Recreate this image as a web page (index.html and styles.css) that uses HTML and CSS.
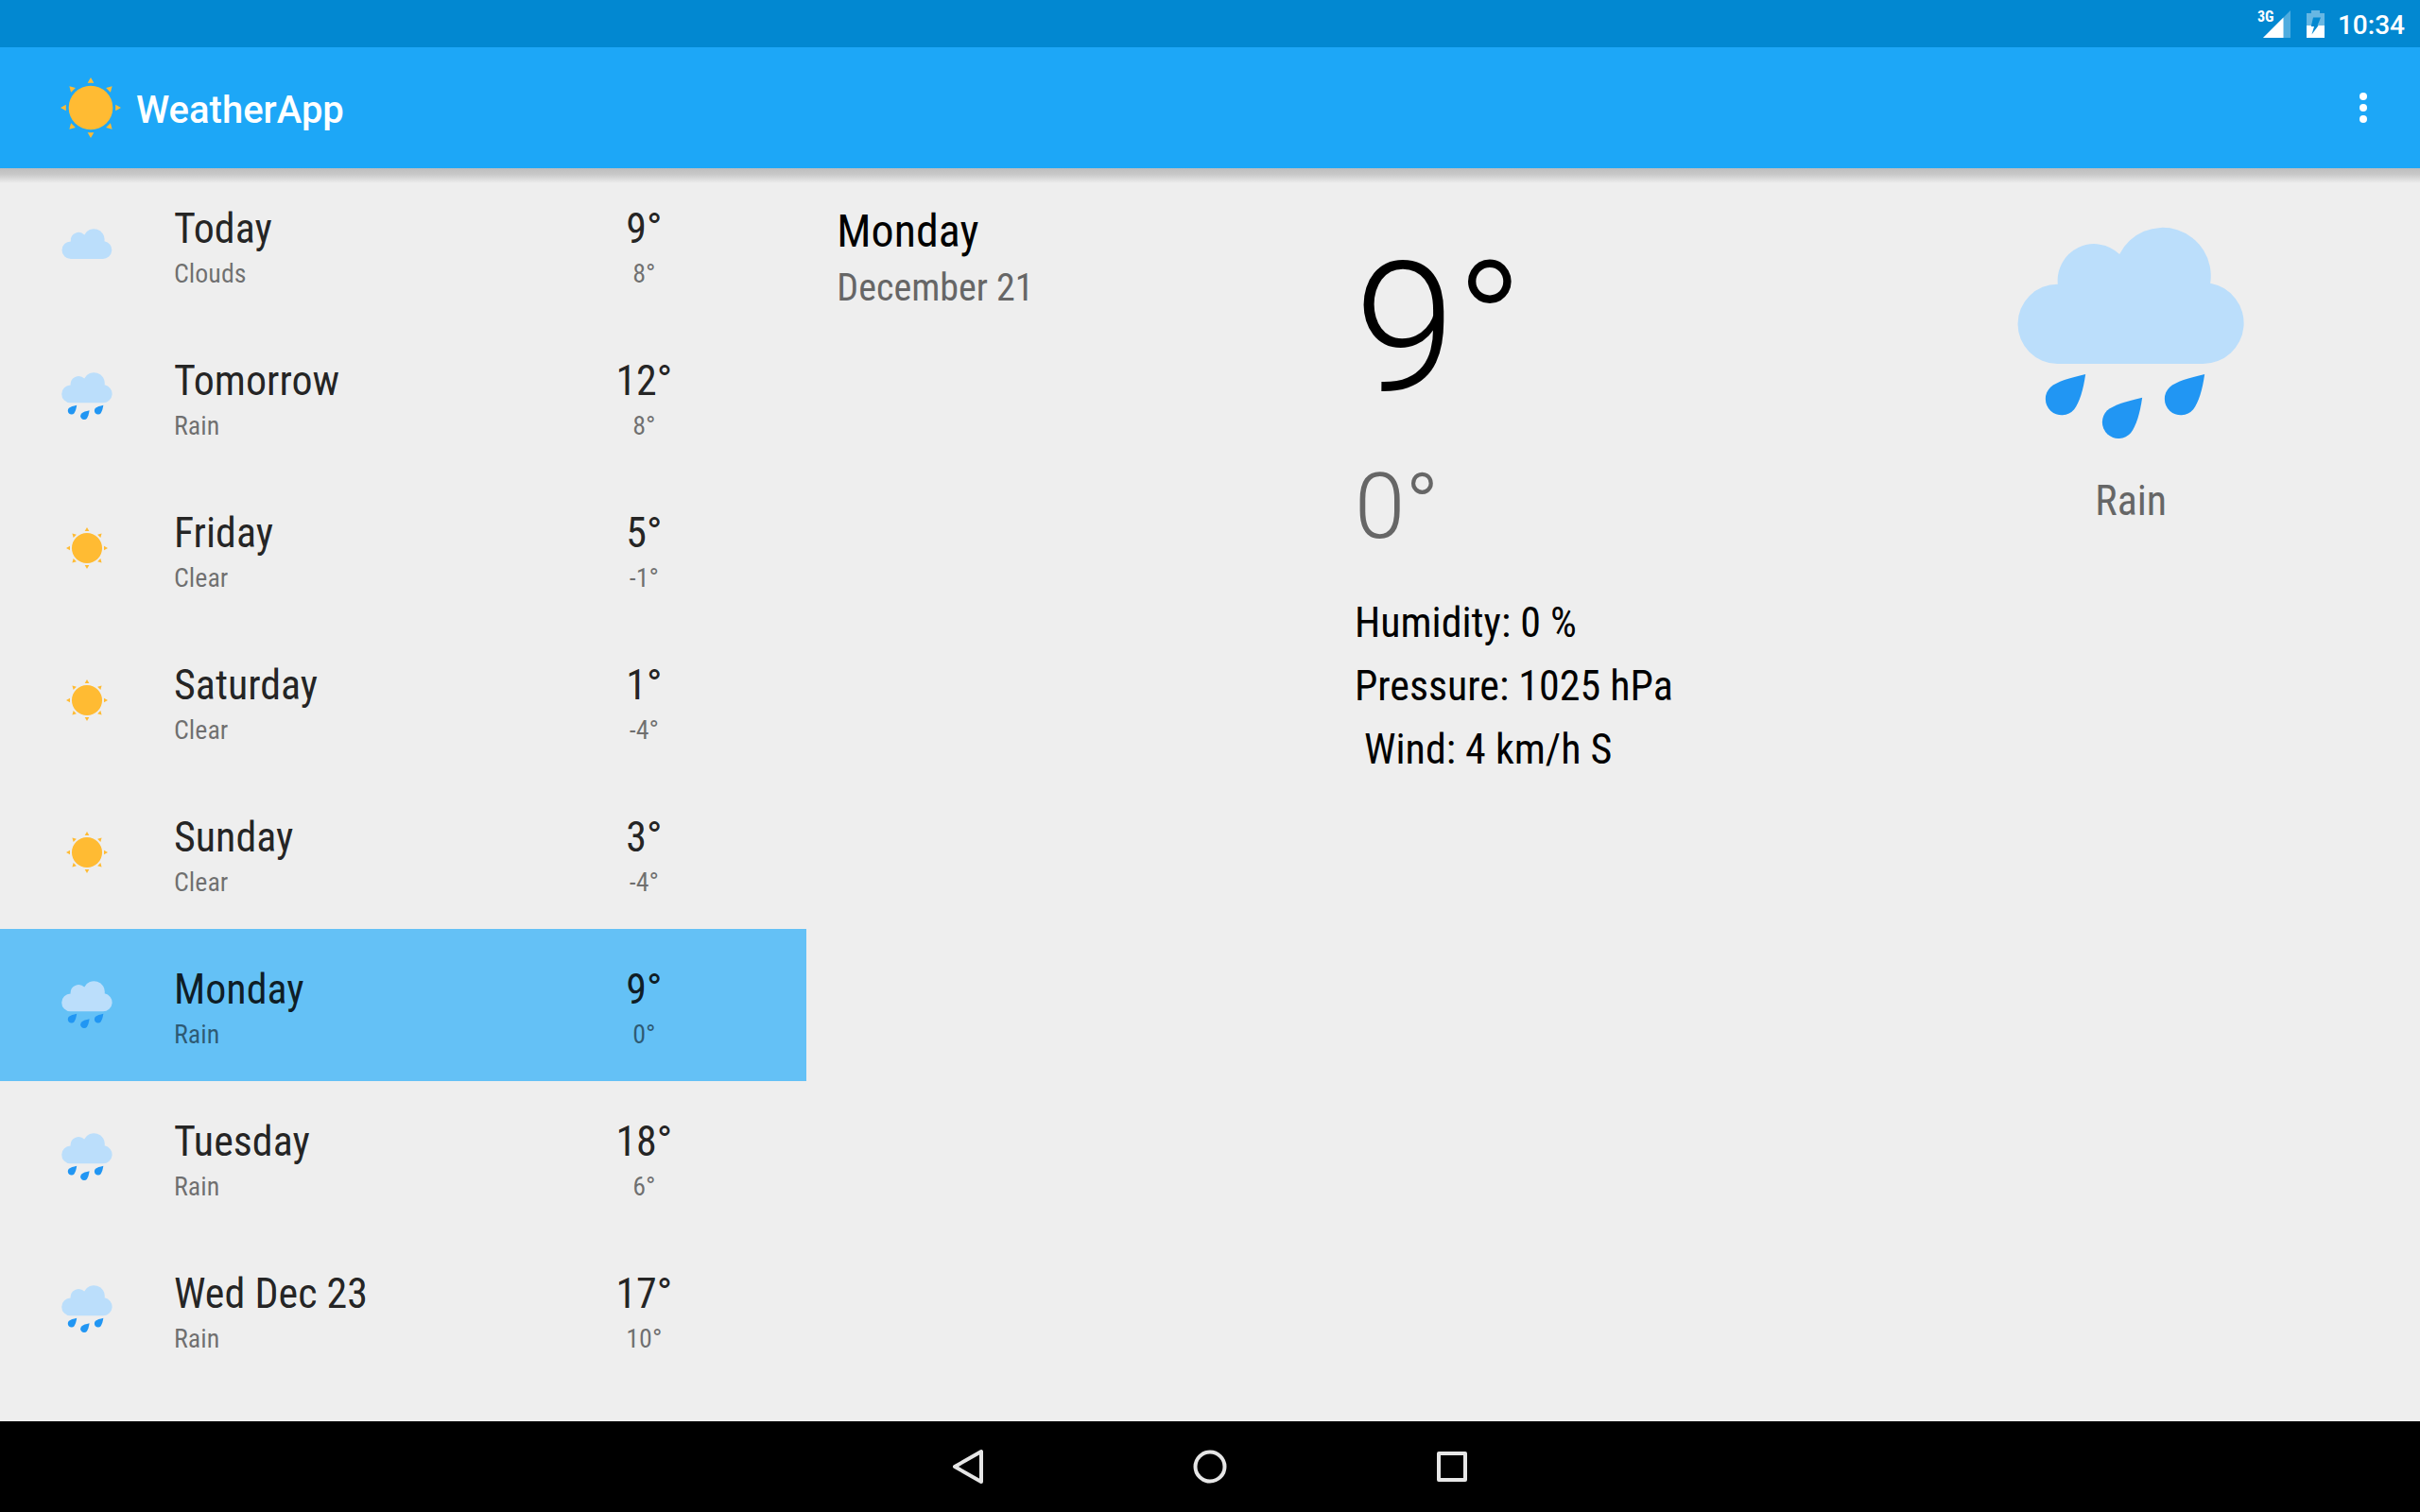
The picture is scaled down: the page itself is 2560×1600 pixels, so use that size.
FILE: index.html
```html
<!DOCTYPE html>
<html lang="en">
<head>
<meta charset="utf-8">
<meta name="viewport" content="width=device-width, initial-scale=1">
<title>WeatherApp</title>
<link rel="stylesheet" href="styles.css">
</head>
<body>
<svg class="sprite" aria-hidden="true">
  <symbol id="cloud" viewBox="101 88 722 435">
    <path fill="#bbdefb" d="M228 523A126.500 126.500 0 0 1 229 270A116 116 0 0 1 425 175A153 153 0 0 1 713 267A129 129 0 0 1 690 523Z"/>
  </symbol>
  <symbol id="rain" viewBox="101 88 722 672">
    <path fill="#bbdefb" d="M228 523A126.500 126.500 0 0 1 229 270A116 116 0 0 1 425 175A153 153 0 0 1 713 267A129 129 0 0 1 690 523Z"/>
    <g fill="#2196f3">
      <path d="M317 556C268 567 225 580 206 597A51.700 51.700 0 1 0 281 668C298 645 310 605 317 556Z"/>
      <path d="M497 630C448 641 405 654 386 671A51.700 51.700 0 1 0 461 742C478 719 490 679 497 630Z"/>
      <path d="M695 556C646 567 603 580 584 597A51.700 51.700 0 1 0 659 668C676 645 688 605 695 556Z"/>
    </g>
  </symbol>
  <symbol id="sun" viewBox="-32.5 -32.5 65 65">
    <g fill="#ffbb33">
      <circle r="23.7"/>
      <path id="ray" d="M0-32.5L3.4-26.6H-3.4Z"/>
      <use href="#ray" transform="rotate(45)"/>
      <use href="#ray" transform="rotate(90)"/>
      <use href="#ray" transform="rotate(135)"/>
      <use href="#ray" transform="rotate(180)"/>
      <use href="#ray" transform="rotate(225)"/>
      <use href="#ray" transform="rotate(270)"/>
      <use href="#ray" transform="rotate(315)"/>
    </g>
  </symbol>
</svg>

<div class="status-bar">
  <div class="signal">
    <span class="network">3G</span>
    <svg class="signal-icon" viewBox="0 0 29 29" aria-hidden="true"><path fill="#fff" fill-opacity=".3" d="M0 29L29 0V29Z"/><path fill="#fff" d="M0 29L21.500 7.500V29Z"/></svg>
  </div>
  <svg class="battery-icon" viewBox="0 0 19 29" aria-hidden="true">
    <path fill="#fff" fill-opacity=".4" fill-rule="evenodd" d="M5 0H14V3H19V16H11.500L15 7.500H7L5 16H0V3H5Z"/>
    <path fill="#fff" d="M0 16H5L4.800 17H8L5.500 25.500L12.500 16H19V29H0Z"/>
  </svg>
  <time class="clock">10:34</time>
</div>

<header class="app-bar">
  <svg class="logo" aria-hidden="true"><use href="#sun"/></svg>
  <h1 class="app-title">WeatherApp</h1>
  <button class="overflow" type="button" aria-label="More options">
    <svg class="overflow-icon" viewBox="0 0 8 32" aria-hidden="true"><g fill="#fff"><circle cx="4" cy="4" r="4"/><circle cx="4" cy="16" r="4"/><circle cx="4" cy="28" r="4"/></g></svg>
  </button>
</header>

<main class="content">
  <ul class="forecast">
    <li><button class="day" type="button"><span class="day-icon"><svg class="icon-cloud"><use href="#cloud"/></svg></span><span class="day-text"><span class="primary">Today</span><span class="secondary">Clouds</span></span><span class="day-temp"><span class="primary">9°</span><span class="secondary">8°</span></span></button></li>
    <li><button class="day" type="button"><span class="day-icon"><svg class="icon-rain"><use href="#rain"/></svg></span><span class="day-text"><span class="primary">Tomorrow</span><span class="secondary">Rain</span></span><span class="day-temp"><span class="primary">12°</span><span class="secondary">8°</span></span></button></li>
    <li><button class="day" type="button"><span class="day-icon"><svg class="icon-sun"><use href="#sun"/></svg></span><span class="day-text"><span class="primary">Friday</span><span class="secondary">Clear</span></span><span class="day-temp"><span class="primary">5°</span><span class="secondary">-1°</span></span></button></li>
    <li><button class="day" type="button"><span class="day-icon"><svg class="icon-sun"><use href="#sun"/></svg></span><span class="day-text"><span class="primary">Saturday</span><span class="secondary">Clear</span></span><span class="day-temp"><span class="primary">1°</span><span class="secondary">-4°</span></span></button></li>
    <li><button class="day" type="button"><span class="day-icon"><svg class="icon-sun"><use href="#sun"/></svg></span><span class="day-text"><span class="primary">Sunday</span><span class="secondary">Clear</span></span><span class="day-temp"><span class="primary">3°</span><span class="secondary">-4°</span></span></button></li>
    <li><button class="day selected" type="button" aria-current="true"><span class="day-icon"><svg class="icon-rain"><use href="#rain"/></svg></span><span class="day-text"><span class="primary">Monday</span><span class="secondary">Rain</span></span><span class="day-temp"><span class="primary">9°</span><span class="secondary">0°</span></span></button></li>
    <li><button class="day" type="button"><span class="day-icon"><svg class="icon-rain"><use href="#rain"/></svg></span><span class="day-text"><span class="primary">Tuesday</span><span class="secondary">Rain</span></span><span class="day-temp"><span class="primary">18°</span><span class="secondary">6°</span></span></button></li>
    <li><button class="day" type="button"><span class="day-icon"><svg class="icon-rain"><use href="#rain"/></svg></span><span class="day-text"><span class="primary">Wed Dec 23</span><span class="secondary">Rain</span></span><span class="day-temp"><span class="primary">17°</span><span class="secondary">10°</span></span></button></li>
  </ul>

  <section class="detail">
    <div class="detail-date">
      <h2 class="weekday">Monday</h2>
      <p class="date">December 21</p>
    </div>
    <div class="detail-readings">
      <p class="high">9°</p>
      <p class="low">0°</p>
      <div class="measures">
        <p>Humidity: 0 %</p>
        <p>Pressure: 1025 hPa</p>
        <p>&nbsp;Wind: 4 km/h S</p>
      </div>
    </div>
    <div class="detail-sky">
      <svg class="sky-icon" aria-hidden="true"><use href="#rain"/></svg>
      <p class="sky-label">Rain</p>
    </div>
  </section>
</main>

<nav class="nav-bar">
  <button class="nav-button" type="button" aria-label="Back"><svg class="nav-icon" viewBox="0 0 40 40"><path d="M34 4V36L6 20Z"/></svg></button>
  <button class="nav-button" type="button" aria-label="Home"><svg class="nav-icon" viewBox="0 0 40 40"><circle cx="20" cy="20" r="15.500"/></svg></button>
  <button class="nav-button" type="button" aria-label="Recent apps"><svg class="nav-icon" viewBox="0 0 40 40"><rect x="6" y="6" width="28" height="28"/></svg></button>
</nav>
</body>
</html>
```

FILE: styles.css
```css
* {
  box-sizing: border-box;
}

body {
  margin: 0;
  min-height: 100vh;
  display: flex;
  flex-direction: column;
  background: #eeeeee;
  color: #000;
  font-family: "Roboto Condensed", Roboto, "Liberation Sans", sans-serif;
}

h1, h2, p, ul {
  margin: 0;
  padding: 0;
  font-weight: 400;
}

ul {
  list-style: none;
}

button {
  border: 0;
  padding: 0;
  background: none;
  color: inherit;
  font: inherit;
  cursor: pointer;
}

svg {
  display: block;
}

.sprite {
  position: absolute;
  width: 0;
  height: 0;
}

/* System status bar */
.status-bar {
  height: 50px;
  padding: 0 16px;
  display: flex;
  justify-content: flex-end;
  align-items: center;
  background: #0288d1;
  color: #fff;
}

.signal {
  position: relative;
  margin-right: 17px;
}

.network {
  position: absolute;
  top: -1px;
  left: -6px;
  font-size: 16px;
  line-height: 16px;
  font-weight: 700;
}

.signal-icon {
  width: 29px;
  height: 29px;
}

.battery-icon {
  width: 19px;
  height: 29px;
  margin-right: 14px;
}

.clock {
  padding-top: 3px;
  font-family: Roboto, "Liberation Sans", sans-serif;
  font-size: 28px;
  line-height: 32px;
  font-weight: 500;
}

/* Toolbar */
.app-bar {
  position: relative;
  height: 128px;
  padding: 0 56px 0 64px;
  display: flex;
  align-items: center;
  background: #1da7f7;
  color: #fff;
}

.app-bar::after {
  content: "";
  position: absolute;
  top: 100%;
  left: 0;
  right: 0;
  height: 16px;
  background: linear-gradient(#bebebe, #c8c8c8 40%, #eeeeee);
}

.logo {
  width: 64px;
  height: 64px;
}

.app-title {
  flex: 1;
  margin-left: 16px;
  padding-top: 5px;
  font-family: Roboto, "Liberation Sans", sans-serif;
  font-size: 40px;
  line-height: 48px;
  font-weight: 500;
}

.overflow-icon {
  width: 8px;
  height: 32px;
}

/* Two-pane layout */
.content {
  flex: 1;
  display: grid;
  grid-template-columns: 1fr 2fr;
}

.day {
  width: 100%;
  min-height: 161px;
  display: grid;
  grid-template-columns: 56px 1fr 96px;
  column-gap: 64px;
  padding: 0 124px 2px 64px;
  text-align: left;
}

.selected {
  background: #64c1f6;
}

.day-icon {
  align-self: center;
  display: grid;
  place-items: center;
}

.icon-cloud {
  width: 54px;
  height: 32px;
}

.icon-rain {
  width: 54px;
  height: 50px;
}

.icon-sun {
  width: 44px;
  height: 44px;
}

.day-text,
.day-temp {
  display: flex;
  flex-direction: column;
  padding-top: 36px;
}

.day-temp {
  text-align: center;
}

.primary {
  font-size: 44px;
  line-height: 56px;
  color: rgba(0, 0, 0, 0.87);
}

.secondary {
  font-size: 28px;
  line-height: 40px;
  color: rgba(0, 0, 0, 0.54);
}

.detail {
  display: grid;
  grid-template-columns: repeat(3, 1fr);
  align-items: start;
  padding: 0 32px;
}

.detail-date {
  display: grid;
  gap: 8px;
  padding-top: 39px;
}

.weekday {
  font-size: 48px;
  line-height: 56px;
}

.date {
  font-size: 40px;
  line-height: 48px;
  color: #666;
}

.detail-readings {
  padding-top: 58px;
}

.high,
.low {
  font-family: Roboto, "Liberation Sans", sans-serif;
  font-weight: 300;
}

.high {
  font-size: 192px;
  line-height: 224px;
}

.low {
  margin-top: 20px;
  font-size: 96px;
  line-height: 112px;
  color: #666;
}

.measures {
  margin-top: 34px;
  font-size: 44px;
  line-height: 67px;
}

.detail-sky {
  display: grid;
  justify-items: center;
  gap: 40px;
  padding-top: 62px;
}

.sky-icon {
  width: 241px;
  height: 224px;
}

.sky-label {
  font-size: 44px;
  line-height: 52px;
  color: #666;
}

/* System navigation bar */
.nav-bar {
  height: 96px;
  display: flex;
  justify-content: center;
  background: #000;
}

.nav-button {
  width: 256px;
  display: grid;
  place-items: center;
}

.nav-icon {
  width: 40px;
  height: 40px;
  fill: none;
  stroke: #e6e6e6;
  stroke-width: 4;
  stroke-linejoin: round;
}
```
